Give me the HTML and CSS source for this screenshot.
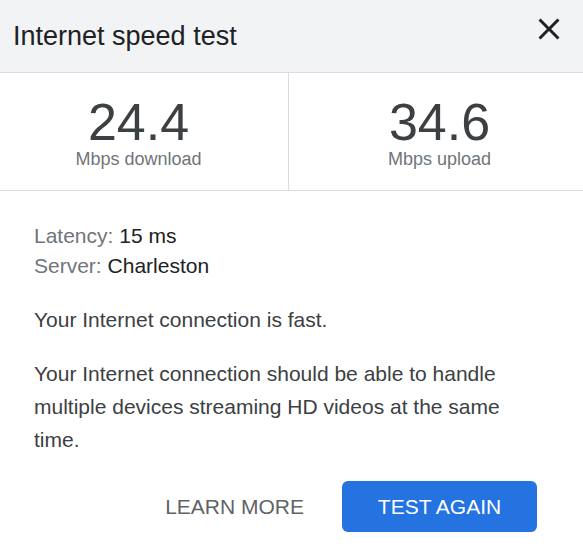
FILE: index.html
```html
<!DOCTYPE html>
<html lang="en">
<head>
<meta charset="utf-8">
<title>Internet speed test</title>
<link rel="stylesheet" href="styles.css">
</head>
<body>
<div class="dialog">
  <header class="header">
    <h1 class="title">Internet speed test</h1>
    <button class="close" aria-label="Close">
      <svg viewBox="0 0 24 24" width="36" height="36" aria-hidden="true"><path d="M19 6.41L17.59 5 12 10.59 6.41 5 5 6.41 10.59 12 5 17.59 6.41 19 12 13.41 17.59 19 19 17.59 13.41 12z"/></svg>
    </button>
  </header>
  <section class="stats">
    <div class="stat stat-down">
      <div class="value">24.4</div>
      <div class="label">Mbps download</div>
    </div>
    <div class="stat stat-up">
      <div class="value">34.6</div>
      <div class="label">Mbps upload</div>
    </div>
  </section>
  <section class="details">
    <div class="meta">
      <div class="meta-row"><span class="key">Latency:</span> <span class="val">15 ms</span></div>
      <div class="meta-row"><span class="key">Server:</span> <span class="val">Charleston</span></div>
    </div>
    <p class="summary">Your Internet connection is fast.</p>
    <p class="desc">Your Internet connection should be able to handle multiple devices streaming HD videos at the same time.</p>
  </section>
  <div class="actions">
    <button class="btn btn-text">LEARN MORE</button>
    <button class="btn btn-primary">TEST AGAIN</button>
  </div>
</div>
</body>
</html>
```

FILE: styles.css
```css
html, body {
  margin: 0;
  padding: 0;
  background: #ffffff;
}

body {
  font-family: Arial, "Liberation Sans", sans-serif;
  color: #202124;
}

.dialog {
  width: 583px;
  height: 556px;
  background: #ffffff;
}

.header {
  display: flex;
  justify-content: space-between;
  align-items: flex-start;
  height: 72px;
  background: #f1f3f4;
  border-bottom: 1px solid #dadce0;
  padding: 0 16px 0 13px;
  box-sizing: content-box;
}

.title {
  margin: 0;
  font-size: 27px;
  font-weight: normal;
  line-height: 72px;
  color: #202124;
}

.close {
  margin-top: 11px;
  width: 36px;
  height: 36px;
  padding: 0;
  border: none;
  background: none;
  cursor: pointer;
}

.close svg {
  display: block;
  fill: #202124;
}

.stats {
  display: grid;
  grid-template-columns: 289px 1fr;
  border-bottom: 1px solid #dadce0;
}

.stat {
  text-align: center;
  padding: 23px 0 20px;
}

.stat-down {
  border-right: 1px solid #dadce0;
  padding-right: 11px;
}

.stat-up {
  padding-left: 7px;
}

.value {
  font-size: 52px;
  line-height: 52px;
  color: #3c4043;
}

.label {
  font-size: 18px;
  line-height: 22px;
  color: #70757a;
}

.details {
  padding: 30px 33px 0 34px;
  font-size: 21px;
  color: #3c4043;
}

.meta-row {
  line-height: 30px;
}

.key {
  color: #70757a;
}

.val {
  color: #202124;
}

.summary {
  margin: 22px 0 0;
  line-height: 33px;
}

.desc {
  margin: 21px 0 0;
  line-height: 33px;
}

.actions {
  display: flex;
  justify-content: flex-end;
  align-items: center;
  padding: 25px 46px 0 0;
}

.btn {
  font-family: Arial, "Liberation Sans", sans-serif;
  font-size: 21px;
  height: 51px;
  border: none;
  cursor: pointer;
}

.btn-text {
  background: none;
  color: #5f6368;
  padding: 0 19px;
  margin-right: 19px;
}

.btn-primary {
  width: 195px;
  background: #2473e1;
  color: #ffffff;
  border-radius: 6px;
}
```
